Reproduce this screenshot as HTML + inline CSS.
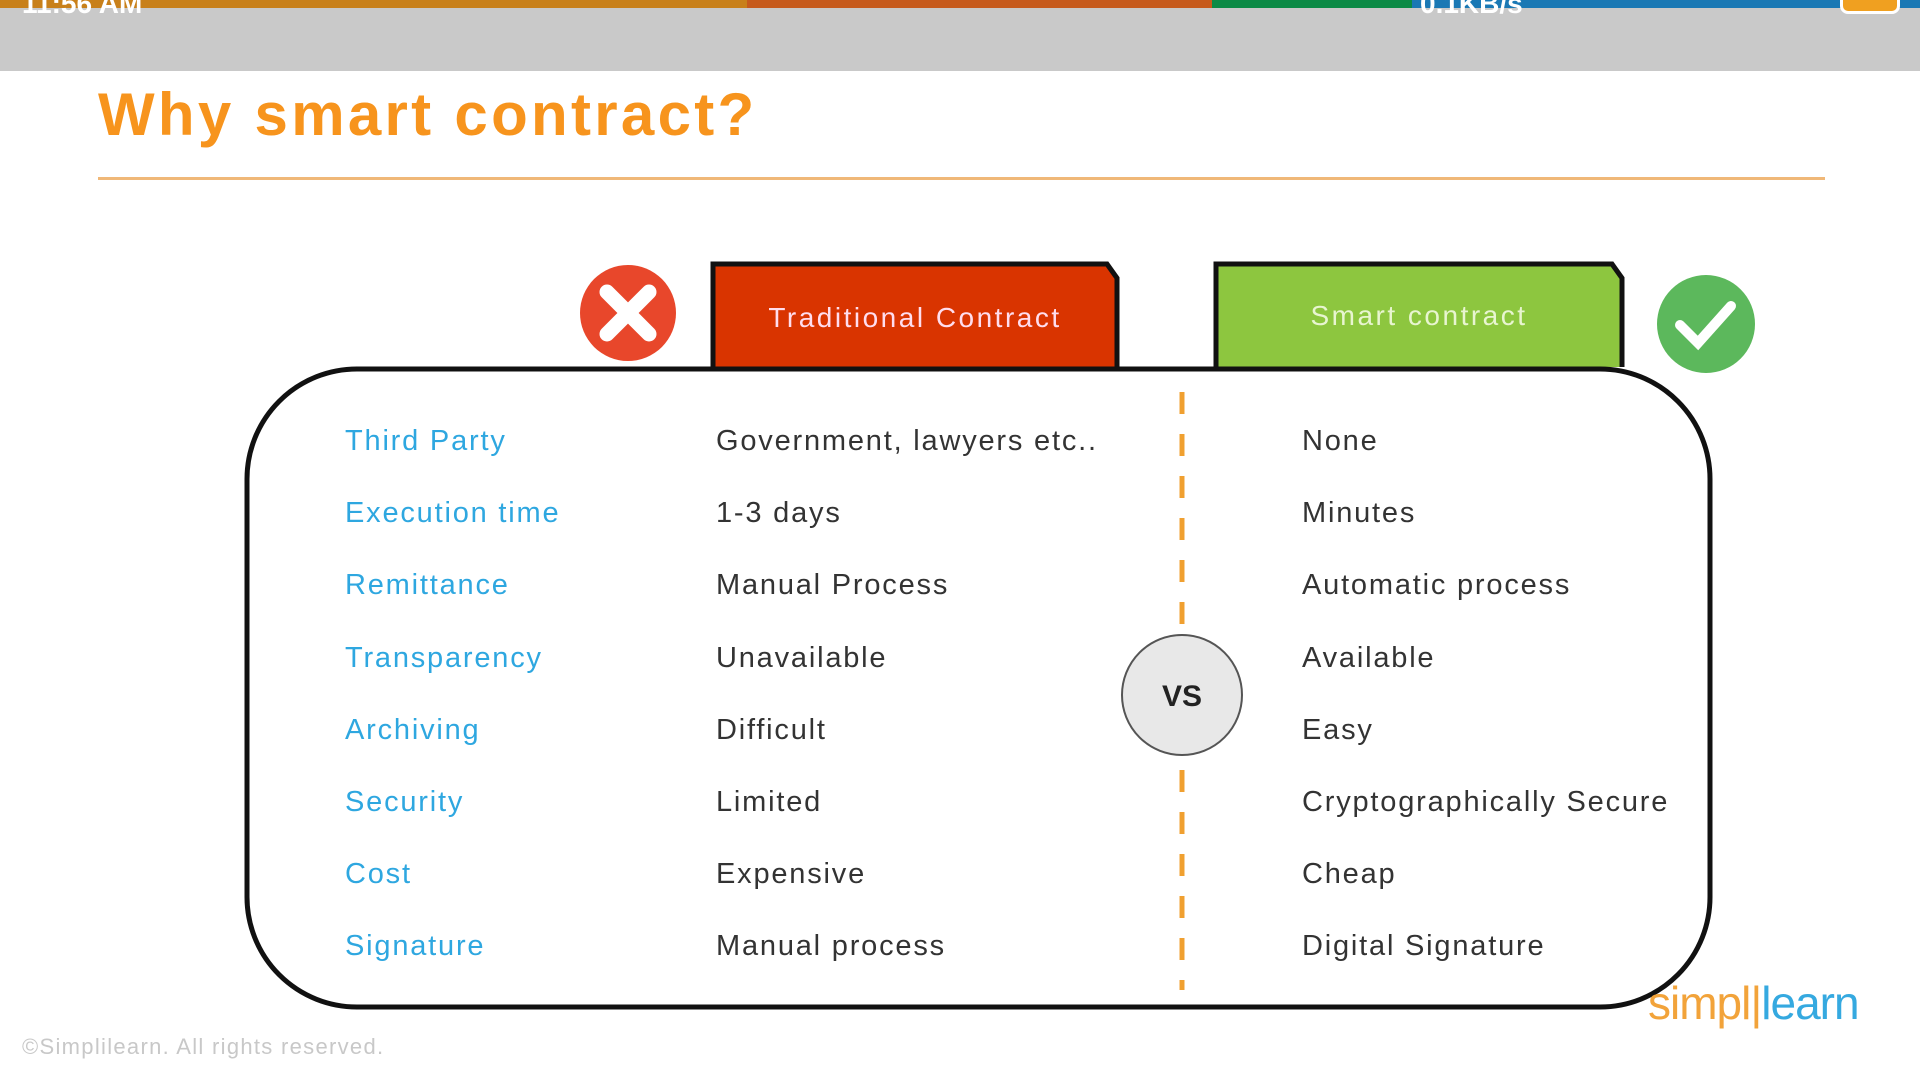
<!DOCTYPE html>
<html><head><meta charset="utf-8"><style>
*{margin:0;padding:0;box-sizing:border-box}
body{width:1920px;height:1080px;background:#fff;position:relative;overflow:hidden;font-family:"Liberation Sans",sans-serif}
.abs{position:absolute}
.row{position:absolute;font-size:29px;color:#333;line-height:36px;letter-spacing:1.8px}
.lbl{color:#2ea7e0}
</style></head><body>
<div class="abs" style="left:0;top:0;width:1920px;height:71px;background:#c9c9c9"></div>
<div class="abs" style="left:0;top:0;width:747px;height:8px;background:#c8801a"></div>
<div class="abs" style="left:747px;top:0;width:465px;height:8px;background:#c65a1c"></div>
<div class="abs" style="left:1212px;top:0;width:200px;height:8px;background:#0b8a45"></div>
<div class="abs" style="left:1412px;top:0;width:508px;height:8px;background:#1a78b4"></div>
<div class="abs" style="left:22px;top:-12px;color:#fff;font-size:28px;font-weight:bold">11:56 AM</div>
<div class="abs" style="left:1420px;top:-12px;color:#fff;font-size:28px;font-weight:bold">0.1KB/s</div>
<div class="abs" style="left:1840px;top:-14px;width:60px;height:28px;border:3px solid #fff;border-radius:8px;background:#f0a020"></div>

<div class="abs" style="left:98px;top:80px;font-size:60px;font-weight:bold;color:#f7941d;letter-spacing:3.3px">Why smart contract?</div>
<div class="abs" style="left:98px;top:177px;width:1727px;height:3px;background:#f0b878"></div>

<svg class="abs" style="left:0;top:0" width="1920" height="1080">
<circle cx="628" cy="313" r="48" fill="#e8472b"/>
<path d="M607 292 L649 334 M649 292 L607 334" stroke="#fff" stroke-width="15" stroke-linecap="round"/>
<path d="M713 367 L713 264 L1107 264 L1117 278 L1117 367" fill="#d93400" stroke="#111" stroke-width="5"/>
<path d="M1216 367 L1216 264 L1612 264 L1622 278 L1622 367" fill="#8dc63f" stroke="#111" stroke-width="5"/>
<circle cx="1706" cy="324" r="49" fill="#5cb85c"/>
<path d="M1680 325 L1698 343 L1731 306" stroke="#fff" stroke-width="10" fill="none" stroke-linecap="round"/>
<rect x="247" y="369" width="1463" height="638" rx="110" fill="none" stroke="#111" stroke-width="5"/>
<line x1="1182" y1="392" x2="1182" y2="625" stroke="#f0a030" stroke-width="5" stroke-dasharray="22,20"/>
<line x1="1182" y1="770" x2="1182" y2="990" stroke="#f0a030" stroke-width="5" stroke-dasharray="22,20"/>
<circle cx="1182" cy="695" r="60" fill="#e8e8e8" stroke="#555" stroke-width="2"/>
<text x="1182" y="706" font-size="30" font-weight="bold" font-family="Liberation Sans" text-anchor="middle" fill="#222">VS</text>
</svg>
<div class="abs" style="left:713px;top:302px;width:404px;text-align:center;color:#fde;font-size:28px;letter-spacing:2.5px">Traditional Contract</div>
<div class="abs" style="left:1216px;top:300px;width:406px;text-align:center;color:#e8f5d0;font-size:28px;letter-spacing:2.5px">Smart contract</div>

<div class="row lbl" style="left:345px;top:423px">Third Party</div>
<div class="row lbl" style="left:345px;top:495px">Execution time</div>
<div class="row lbl" style="left:345px;top:567px">Remittance</div>
<div class="row lbl" style="left:345px;top:640px">Transparency</div>
<div class="row lbl" style="left:345px;top:712px">Archiving</div>
<div class="row lbl" style="left:345px;top:784px">Security</div>
<div class="row lbl" style="left:345px;top:856px">Cost</div>
<div class="row lbl" style="left:345px;top:928px">Signature</div>

<div class="row" style="left:716px;top:423px">Government, lawyers etc..</div>
<div class="row" style="left:716px;top:495px">1-3 days</div>
<div class="row" style="left:716px;top:567px">Manual Process</div>
<div class="row" style="left:716px;top:640px">Unavailable</div>
<div class="row" style="left:716px;top:712px">Difficult</div>
<div class="row" style="left:716px;top:784px">Limited</div>
<div class="row" style="left:716px;top:856px">Expensive</div>
<div class="row" style="left:716px;top:928px">Manual process</div>

<div class="row" style="left:1302px;top:423px">None</div>
<div class="row" style="left:1302px;top:495px">Minutes</div>
<div class="row" style="left:1302px;top:567px">Automatic process</div>
<div class="row" style="left:1302px;top:640px">Available</div>
<div class="row" style="left:1302px;top:712px">Easy</div>
<div class="row" style="left:1302px;top:784px">Cryptographically Secure</div>
<div class="row" style="left:1302px;top:856px">Cheap</div>
<div class="row" style="left:1302px;top:928px">Digital Signature</div>

<div class="abs" style="left:1648px;top:976px;font-size:46px;letter-spacing:-1px"><span style="color:#f2a33a">simpl</span><span style="color:#f2a33a">|</span><span style="color:#35a9e0">learn</span></div>
<div class="abs" style="left:22px;top:1034px;font-size:22px;color:#c8c8c8;letter-spacing:1.3px">©Simplilearn. All rights reserved.</div>
</body></html>
